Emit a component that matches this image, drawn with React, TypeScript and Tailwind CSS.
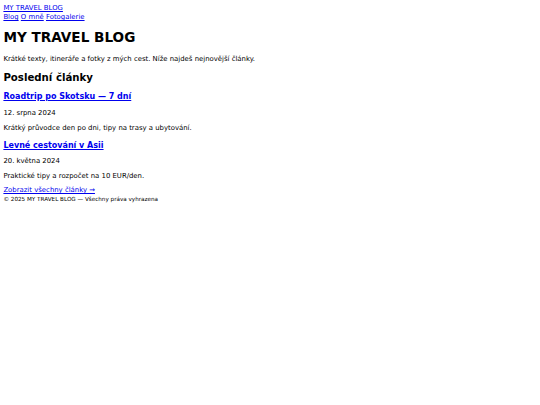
export default function App() {
  const link = 'text-[#0000ee] underline'
  return (
    <div className="min-h-[405px] bg-white text-black text-[6.9px] leading-[9px] px-[3.4px] pt-[4px] font-['DejaVu_Sans',sans-serif]">
      <header>
        <a href="#" className={link}>MY TRAVEL BLOG</a>
        <nav>
          <a href="#" className={link}>Blog</a>{' '}
          <a href="#" className={link}>O mně</a>{' '}
          <a href="#" className={link}>Fotogalerie</a>
        </nav>
      </header>
      <main>
        <h1 className="text-[13.6px] leading-[16px] font-bold mt-[7px]">MY TRAVEL BLOG</h1>
        <p className="mt-[10px]">Krátké texty, itineráře a fotky z mých cest. Níže najdeš nejnovější články.</p>
        <h2 className="text-[10.2px] leading-[12px] font-bold mt-[7.5px]">Poslední články</h2>
        <article>
          <h3 className="text-[8px] leading-[10px] font-bold mt-[8px]">
            <a href="#" className={link}>Roadtrip po Skotsku — 7 dní</a>
          </h3>
          <p className="mt-[7.5px]">12. srpna 2024</p>
          <p className="mt-[6px]">Krátký průvodce den po dni, tipy na trasy a ubytování.</p>
        </article>
        <article>
          <h3 className="text-[8px] leading-[10px] font-bold mt-[7.5px]">
            <a href="#" className={link}>Levné cestování v Asii</a>
          </h3>
          <p className="mt-[6.5px]">20. května 2024</p>
          <p className="mt-[6px]">Praktické tipy a rozpočet na 10 EUR/den.</p>
        </article>
        <p className="mt-[5px]">
          <a href="#" className={link}>Zobrazit všechny články →</a>
        </p>
      </main>
      <footer className="mt-[1px] leading-[7px]">
        <small className="text-[5.65px]">© 2025 MY TRAVEL BLOG — Všechny práva vyhrazena</small>
      </footer>
    </div>
  )
}
